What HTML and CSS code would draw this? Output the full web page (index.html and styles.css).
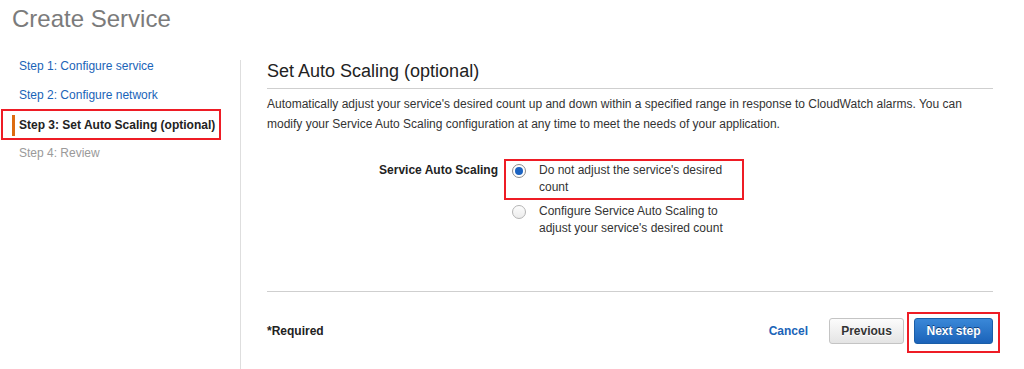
FILE: index.html
```html
<!DOCTYPE html>
<html lang="en">
<head>
    <meta charset="UTF-8">
    <meta name="viewport" content="width=device-width, initial-scale=1.0">
    <title>Create Service</title>
    <link rel="stylesheet" href="styles.css">
</head>
<body>
    <h1 class="page-title">Create Service</h1>

    <div class="layout">
        <ul class="steps">
            <li class="step"><a class="step-link" href="#">Step 1: Configure service</a></li>
            <li class="step"><a class="step-link" href="#">Step 2: Configure network</a></li>
            <li class="step step-active highlight"><span class="step-link">Step 3: Set Auto Scaling (optional)</span></li>
            <li class="step step-disabled"><span class="step-link">Step 4: Review</span></li>
        </ul>

        <div class="main">
            <h2 class="section-title">Set Auto Scaling (optional)</h2>
            <p class="section-desc">
                Automatically adjust your service's desired count up and down within a specified range in response to CloudWatch alarms. You can
                modify your Service Auto Scaling configuration at any time to meet the needs of your application.
            </p>

            <div class="form-row">
                <div class="form-label">Service Auto Scaling</div>
                <div class="options">
                    <label class="option highlight">
                        <span class="radio radio-checked"></span>
                        <span class="option-text">Do not adjust the service's desired count</span>
                    </label>
                    <label class="option">
                        <span class="radio"></span>
                        <span class="option-text">Configure Service Auto Scaling to adjust your service's desired count</span>
                    </label>
                </div>
            </div>

            <div class="footer">
                <span class="required">*Required</span>
                <a class="cancel" href="#">Cancel</a>
                <button class="btn btn-default">Previous</button>
                <span class="btn-frame">
                    <button class="btn btn-primary">Next step</button>
                </span>
            </div>
        </div>
    </div>
</body>
</html>
```

FILE: styles.css
```css
* {
    margin: 0;
    padding: 0;
    box-sizing: border-box;
}

body {
    font-family: "Liberation Sans", Arial, sans-serif;
    font-size: 12px;
    color: #333;
    background: #fff;
    height: 100vh;
    overflow: hidden;
}

.page-title {
    font-size: 24px;
    font-weight: 400;
    line-height: 28px;
    color: #7b7b7b;
    padding: 5px 12px 0;
}

.layout {
    display: flex;
    align-items: stretch;
    margin-top: 19px;
    height: calc(100vh - 52px);
}

/* left wizard steps */
.steps {
    list-style: none;
    width: 240px;
    padding-left: 2px;
    padding-right: 20px;
}

.step {
    padding: 4px 0;
}

.step-link {
    display: block;
    margin-left: 10px;
    padding-left: 7px;
    line-height: 21px;
    color: #1a64b8;
    text-decoration: none;
}

.step-active .step-link {
    border-left: 3px solid #dd6b10;
    padding-left: 4px;
    font-weight: 700;
    color: #222;
}

.step-disabled .step-link {
    color: #9a9a9a;
}

.highlight {
    outline: 2px solid #ee1c25;
    outline-offset: -1px;
}

.step.highlight {
    padding: 5px 0 3px;
}

/* main panel */
.main {
    flex: 1;
    margin-top: 8px;
    border-left: 1px solid #dedede;
    padding: 0 31px 0 26px;
}

.section-title {
    font-size: 18px;
    font-weight: 400;
    line-height: 22px;
    color: #222;
    padding-bottom: 6px;
    border-bottom: 1px solid #cfcfcf;
}

.section-desc {
    margin-top: 5px;
    line-height: 20px;
    color: #333;
}

.form-row {
    display: flex;
    margin-top: 26px;
}

.form-label {
    width: 231px;
    margin-right: 7px;
    text-align: right;
    font-weight: 700;
    line-height: 17px;
    padding-top: 2px;
    color: #222;
}

.options {
    display: flex;
    flex-direction: column;
    gap: 2px;
}

.option {
    display: flex;
    align-items: flex-start;
    width: 238px;
    padding: 2px 14px 3px 7px;
    cursor: pointer;
}

.radio {
    flex: none;
    width: 14px;
    height: 14px;
    margin-top: 2px;
    margin-right: 13px;
    border: 1px solid #b5b5b5;
    border-radius: 50%;
    background: linear-gradient(#fdfdfd, #ececec);
    display: flex;
    align-items: center;
    justify-content: center;
}

.radio-checked {
    border-color: #8c8c8c;
    background: #fff;
}

.radio-checked::after {
    content: '';
    width: 8px;
    height: 8px;
    border-radius: 50%;
    background: #1c63c1;
}

.option-text {
    line-height: 17px;
    color: #333;
}

/* footer */
.footer {
    display: flex;
    align-items: center;
    margin-top: 51px;
    padding-top: 26px;
    border-top: 1px solid #cfcfcf;
}

.required {
    font-weight: 700;
    color: #222;
    margin-right: auto;
}

.cancel {
    font-weight: 700;
    color: #1a64b8;
    text-decoration: none;
    margin-right: 21px;
}

.btn {
    height: 26px;
    padding: 0 8px;
    border-radius: 3px;
    font-family: inherit;
    font-size: 12px;
    font-weight: 700;
    white-space: nowrap;
    cursor: pointer;
}

.btn-default {
    width: 75px;
    border: 1px solid #c4c4c4;
    background: linear-gradient(#fcfcfc, #e4e4e4);
    color: #333;
    text-shadow: 0 1px 0 #fff;
}

.btn-frame {
    display: flex;
    margin: -6px -7px -9px 3px;
    padding: 4px 5px 7px 5px;
    border: 2px solid #ee1c25;
}

.btn-primary {
    width: 79px;
    border: 1px solid #1a5ea8;
    background: linear-gradient(#3a88d8, #1b63b9);
    color: #fff;
    text-shadow: 0 -1px 0 #123f7a;
}
```
